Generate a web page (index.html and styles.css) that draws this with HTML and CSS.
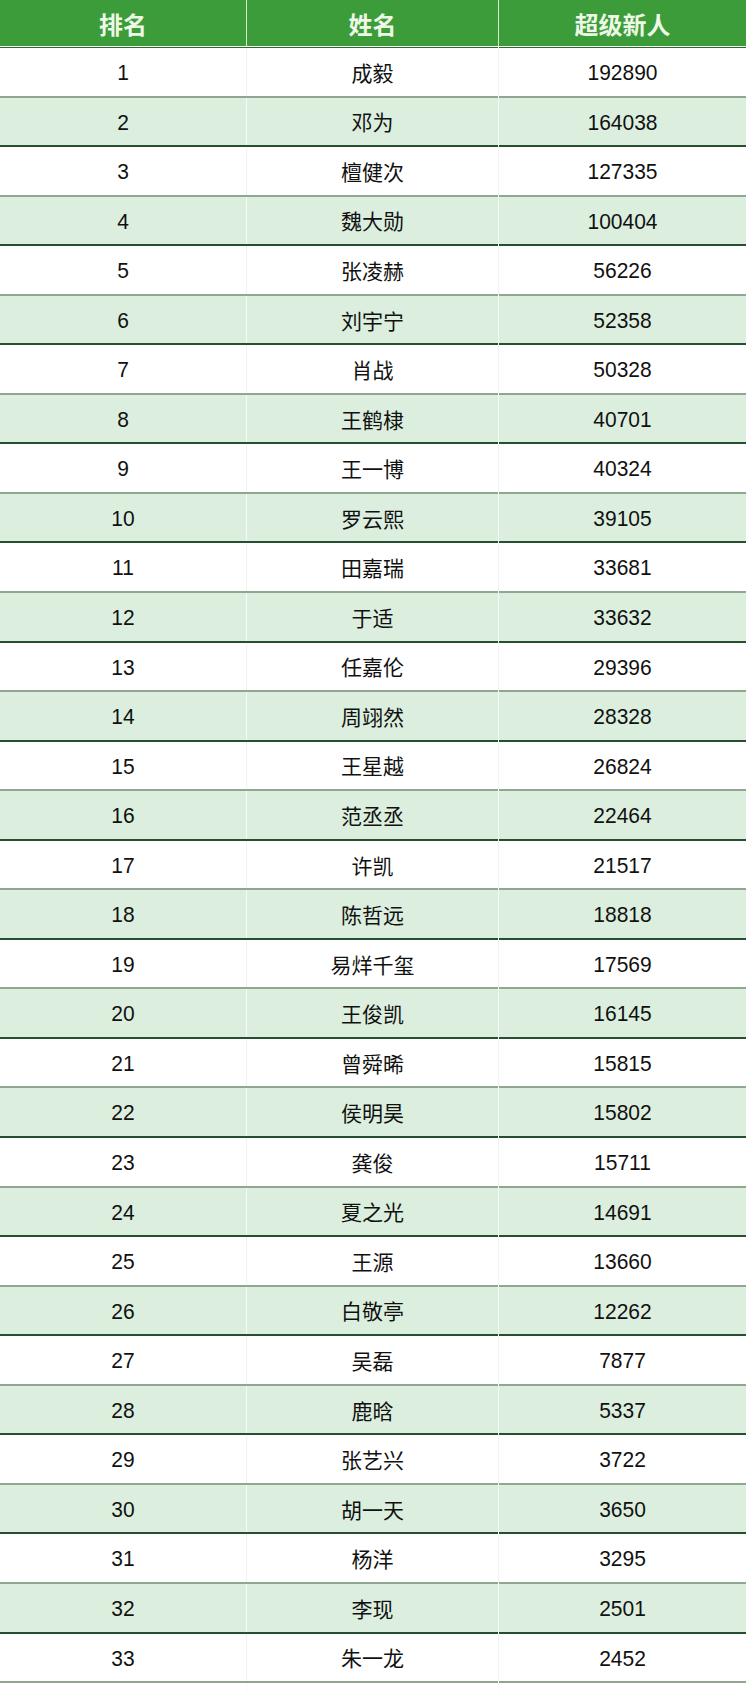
FILE: index.html
```html
<!DOCTYPE html>
<html lang="zh">
<head>
<meta charset="utf-8">
<title>超级新人</title>
<link rel="stylesheet" href="styles.css">
</head>
<body>
<div class="table">
  <div class="head">
    <div class="hc">排名</div>
    <div class="hc">姓名</div>
    <div class="hc">超级新人</div>
  </div>
  <div class="rows" id="rows">
    <div class="row"><div class="c num">1</div><div class="c">成毅</div><div class="c num">192890</div></div>
    <div class="row"><div class="c num">2</div><div class="c">邓为</div><div class="c num">164038</div></div>
    <div class="row"><div class="c num">3</div><div class="c">檀健次</div><div class="c num">127335</div></div>
    <div class="row"><div class="c num">4</div><div class="c">魏大勋</div><div class="c num">100404</div></div>
    <div class="row"><div class="c num">5</div><div class="c">张凌赫</div><div class="c num">56226</div></div>
    <div class="row"><div class="c num">6</div><div class="c">刘宇宁</div><div class="c num">52358</div></div>
    <div class="row"><div class="c num">7</div><div class="c">肖战</div><div class="c num">50328</div></div>
    <div class="row"><div class="c num">8</div><div class="c">王鹤棣</div><div class="c num">40701</div></div>
    <div class="row"><div class="c num">9</div><div class="c">王一博</div><div class="c num">40324</div></div>
    <div class="row"><div class="c num">10</div><div class="c">罗云熙</div><div class="c num">39105</div></div>
    <div class="row"><div class="c num">11</div><div class="c">田嘉瑞</div><div class="c num">33681</div></div>
    <div class="row"><div class="c num">12</div><div class="c">于适</div><div class="c num">33632</div></div>
    <div class="row"><div class="c num">13</div><div class="c">任嘉伦</div><div class="c num">29396</div></div>
    <div class="row"><div class="c num">14</div><div class="c">周翊然</div><div class="c num">28328</div></div>
    <div class="row"><div class="c num">15</div><div class="c">王星越</div><div class="c num">26824</div></div>
    <div class="row"><div class="c num">16</div><div class="c">范丞丞</div><div class="c num">22464</div></div>
    <div class="row"><div class="c num">17</div><div class="c">许凯</div><div class="c num">21517</div></div>
    <div class="row"><div class="c num">18</div><div class="c">陈哲远</div><div class="c num">18818</div></div>
    <div class="row"><div class="c num">19</div><div class="c">易烊千玺</div><div class="c num">17569</div></div>
    <div class="row"><div class="c num">20</div><div class="c">王俊凯</div><div class="c num">16145</div></div>
    <div class="row"><div class="c num">21</div><div class="c">曾舜晞</div><div class="c num">15815</div></div>
    <div class="row"><div class="c num">22</div><div class="c">侯明昊</div><div class="c num">15802</div></div>
    <div class="row"><div class="c num">23</div><div class="c">龚俊</div><div class="c num">15711</div></div>
    <div class="row"><div class="c num">24</div><div class="c">夏之光</div><div class="c num">14691</div></div>
    <div class="row"><div class="c num">25</div><div class="c">王源</div><div class="c num">13660</div></div>
    <div class="row"><div class="c num">26</div><div class="c">白敬亭</div><div class="c num">12262</div></div>
    <div class="row"><div class="c num">27</div><div class="c">吴磊</div><div class="c num">7877</div></div>
    <div class="row"><div class="c num">28</div><div class="c">鹿晗</div><div class="c num">5337</div></div>
    <div class="row"><div class="c num">29</div><div class="c">张艺兴</div><div class="c num">3722</div></div>
    <div class="row"><div class="c num">30</div><div class="c">胡一天</div><div class="c num">3650</div></div>
    <div class="row"><div class="c num">31</div><div class="c">杨洋</div><div class="c num">3295</div></div>
    <div class="row"><div class="c num">32</div><div class="c">李现</div><div class="c num">2501</div></div>
    <div class="row"><div class="c num">33</div><div class="c">朱一龙</div><div class="c num">2452</div></div>
    <div class="row tail"><div class="c"></div><div class="c"></div><div class="c"></div></div>
  </div>
</div>
</body>
</html>
```
FILE: styles.css
```css
html, body {
  margin: 0;
  padding: 0;
  background: #ffffff;
}
body {
  width: 746px;
  height: 1692px;
  overflow: hidden;
  font-family: "Liberation Sans", Arial, "Noto Sans CJK SC", sans-serif;
}
.table {
  width: 746px;
}
.head {
  display: grid;
  grid-template-columns: 246px 252px 248px;
  height: 46px;
  background: #3b9c39;
  border-bottom: 1px solid #f4fbf2;
}
.hc {
  display: flex;
  align-items: center;
  justify-content: center;
  color: #eef8e6;
  font-family: "Noto Sans CJK SC", sans-serif;
  font-weight: 700;
  font-size: 24px;
  border-left: 1px solid #d8efd2;
}
.hc:first-child {
  border-left: none;
}
.rows {
  border-top: 1px solid #2d6a33;
}
.row {
  display: grid;
  grid-template-columns: 246px 252px 248px;
  height: 49.55px;
  box-sizing: border-box;
  border-bottom: 2px solid #8fa690;
  background: #ffffff;
}
.row:nth-child(even) {
  background: #dcefdf;
  border-bottom-color: #284e30;
}
.row.tail {
  background: #ffffff;
  border-bottom: none;
}
.c {
  display: flex;
  align-items: center;
  justify-content: center;
  color: #111111;
  font-family: "Noto Sans CJK SC", sans-serif;
  font-size: 21px;
  border-left: 1px solid #eef4ee;
}
.row:nth-child(even) .c {
  border-left-color: #f6fbf6;
}
.c:first-child {
  border-left: none;
}
.c.num {
  font-family: "Liberation Sans", Arial, sans-serif;
  font-size: 21px;
  transform: scaleY(1.08);
}
```
